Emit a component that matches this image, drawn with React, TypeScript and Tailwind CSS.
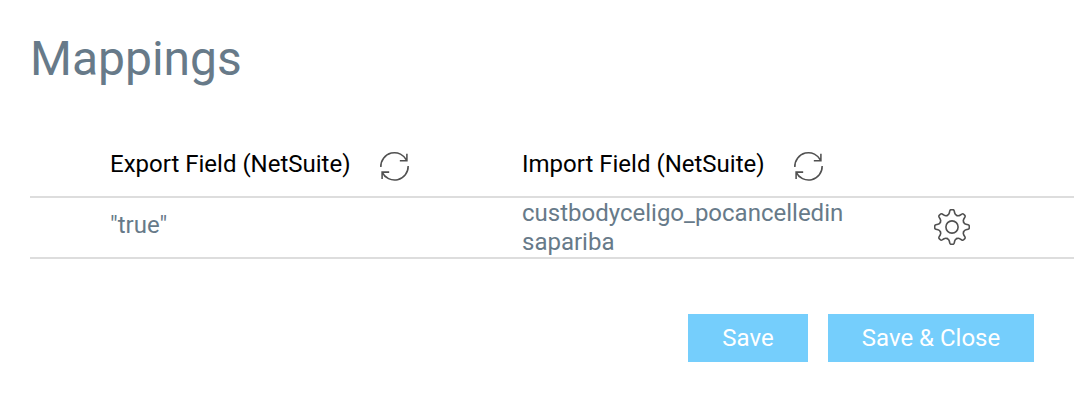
interface RefreshIconProps {
  className?: string;
}

function RefreshIcon({ className }: RefreshIconProps) {
  return (
    <svg
      viewBox="0 0 32 32"
      className={className}
      fill="none"
      stroke="#505050"
      strokeWidth="1.6"
    >
      <path d="M1.900 16.500A14.100 14.100 0 0 1 28.800 10M28.800 2.800V10H21.500" />
      <path d="M30.100 15.500A14.100 14.100 0 0 1 3.200 21.800M3.200 29V21.800H10.500" />
    </svg>
  );
}

// one tooth with half a valley on each side, repeated around the hub
const toothAngles = [0, 45, 90, 135, 180, 225, 270, 315];

function GearIcon() {
  return (
    <svg
      viewBox="-18 -18 36 36"
      className="-mt-0.5 h-9 w-9"
      fill="none"
      stroke="#505050"
      strokeWidth="1.600"
      strokeLinecap="round"
      strokeLinejoin="round"
    >
      <circle r="6.100" />
      {toothAngles.map((angle) => (
        <path
          key={angle}
          transform={`rotate(${angle})`}
          d="M-4.800-11.600C-3.500-12.100-3-12.800-2.700-14L-2.200-16.100Q-1.900-17.300-.8-17.300H.8Q1.900-17.300 2.200-16.100L2.700-14C3-12.800 3.500-12.100 4.800-11.600"
        />
      ))}
    </svg>
  );
}

export default function App() {
  return (
    <main className="h-[412px] w-[1074px] overflow-hidden bg-white pl-[30px] pt-[31px] font-[Roboto,sans-serif] text-2xl text-[#677a89]">
      <h1 className="h-[99px] text-[48px] leading-[56px]">Mappings</h1>
      <div className="grid h-[66px] grid-cols-[412px_1fr] pl-20 pt-5 leading-7 text-black">
        <div className="flex gap-7">
          Export Field (NetSuite)
          <RefreshIcon className="mt-px h-[31px] w-[31px]" />
        </div>
        <div className="flex gap-7">
          Import Field (NetSuite)
          <RefreshIcon className="mt-px h-[31px] w-[31px]" />
        </div>
      </div>
      <div className="grid h-[63px] grid-cols-[412px_412px_1fr] items-center border-y-2 border-[#ddd] pl-20 leading-[29px]">
        <span className="pb-1">"true"</span>
        <span className="w-[330px] break-all">custbodyceligo_pocancelledinsapariba</span>
        <GearIcon />
      </div>
      <div className="mt-[55px] flex justify-end gap-5 pr-10 text-white">
        <button className="h-12 w-[120px] bg-[#75cefc]">Save</button>
        <button className="h-12 w-[206px] bg-[#75cefc]">Save &amp; Close</button>
      </div>
    </main>
  );
}
